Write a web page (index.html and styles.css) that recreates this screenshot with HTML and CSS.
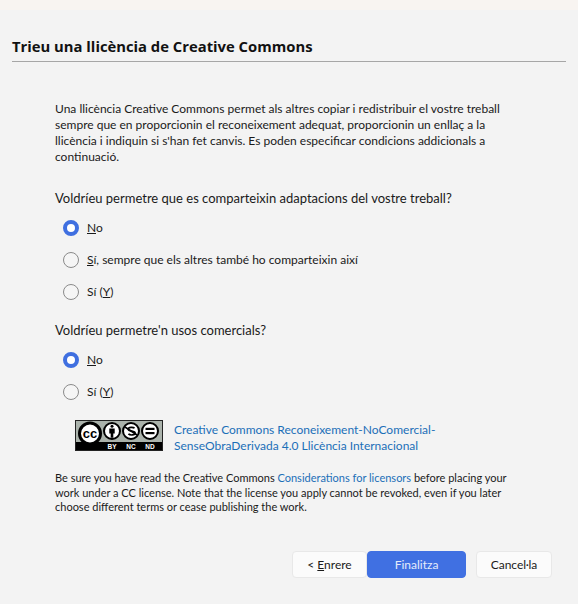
FILE: index.html
```html
<!DOCTYPE html>
<html lang="ca">
<head>
<meta charset="utf-8">
<title>Trieu una llicència</title>
<link rel="stylesheet" href="styles.css">
</head>
<body>
<div class="topstrip"></div>
<main class="dialog">
  <h1 class="title">Trieu una llicència de Creative Commons</h1>
  <div class="content">
    <p class="intro">Una llicència Creative Commons permet als altres copiar i redistribuir el vostre treball<br>sempre que en proporcionin el reconeixement adequat, proporcionin un enllaç a la<br>llicència i indiquin si s'han fet canvis. Es poden especificar condicions addicionals a<br>continuació.</p>
    <h2 class="question q1">Voldríeu permetre que es comparteixin adaptacions del vostre treball?</h2>
    <div class="options">
      <div class="option"><span class="radio on"></span><span class="label"><u>N</u>o</span></div>
      <div class="option"><span class="radio"></span><span class="label"><u>S</u>í, sempre que els altres també ho comparteixin així</span></div>
      <div class="option"><span class="radio"></span><span class="label">Sí (<u>Y</u>)</span></div>
    </div>
    <h2 class="question q2">Voldríeu permetre'n usos comercials?</h2>
    <div class="options">
      <div class="option"><span class="radio on"></span><span class="label"><u>N</u>o</span></div>
      <div class="option"><span class="radio"></span><span class="label">Sí (<u>Y</u>)</span></div>
    </div>
    <div class="license">
      <svg class="badge" width="88" height="31" viewBox="0 0 88 31">
        <rect x="0.5" y="0.5" width="87" height="30" fill="#aab2ab" stroke="#222"/>
        <rect x="1" y="22" width="86" height="8" fill="#000"/>
        <circle cx="15" cy="13.5" r="10.5" fill="#fff" stroke="#000" stroke-width="3"/>
        <text x="15" y="18" class="cc">cc</text>
        <circle cx="37" cy="11" r="8" fill="#fff" stroke="#000" stroke-width="2"/>
        <circle cx="37" cy="6.3" r="1.5" fill="#000"/>
        <path d="M34.3 8.6h5.4v5h-1.4v4.2h-2.6v-4.2h-1.4z" fill="#000"/>
        <circle cx="56" cy="11" r="8" fill="#fff" stroke="#000" stroke-width="2"/>
        <path d="M50 7l12 8" stroke="#000" stroke-width="1.6"/>
        <path d="M59.5 8.3c-1-1.3-6.2-1.6-6.2 1 0 2.6 6.8 1.2 6.8 3.8 0 2.4-5.2 2.3-6.7.8" fill="none" stroke="#000" stroke-width="1.7"/>
        <circle cx="75" cy="11" r="8" fill="#fff" stroke="#000" stroke-width="2"/>
        <rect x="70.5" y="7.8" width="9" height="2.2" fill="#000"/>
        <rect x="70.5" y="12" width="9" height="2.2" fill="#000"/>
        <text x="37" y="29" class="tag">BY</text>
        <text x="56" y="29" class="tag">NC</text>
        <text x="75" y="29" class="tag">ND</text>
      </svg>
      <a class="link license-name">Creative Commons Reconeixement-NoComercial-<br>SenseObraDerivada 4.0 Llicència Internacional</a>
    </div>
    <p class="note">Be sure you have read the Creative Commons <a class="link">Considerations for licensors</a> before placing your<br>work under a CC license. Note that the license you apply cannot be revoked, even if you later<br>choose different terms or cease publishing the work.</p>
  </div>
  <div class="buttons">
    <button class="btn back">&lt; <u>E</u>nrere</button>
    <button class="btn primary">Finalitza</button>
    <button class="btn cancel">Cancel·la</button>
  </div>
</main>
</body>
</html>
```

FILE: styles.css
```css
* { box-sizing: border-box; }
html, body { margin: 0; padding: 0; }
body {
  width: 578px;
  height: 604px;
  overflow: hidden;
  background: #f3f3f3;
  color: #1a1a1a;
  font-family: Lato, "Open Sans", sans-serif;
  font-size: 12px;
}
.topstrip { height: 10px; background: #f8f4f1; }
.dialog { padding: 26px 12px 0; }
.title {
  margin: 0;
  height: 26px;
  border-bottom: 1px solid #a6a6a6;
  font-family: "Open Sans", sans-serif;
  font-size: 14.8px;
  font-weight: 700;
  line-height: 21px;
  color: #111;
}
.content { padding: 0 43px; }
.intro { margin: 39px 0 0; line-height: 16px; font-size: 12px; }
.question { margin: 0; font-size: 13px; font-weight: 400; line-height: 18px; }
.q1 { margin-top: 24px; }
.q2 { margin-top: 19px; }
.options { display: flex; flex-direction: column; gap: 12px; margin-top: 11px; padding-left: 8px; }
.option { display: flex; align-items: center; gap: 8px; height: 20px; }
.radio {
  width: 16px; height: 16px; border-radius: 50%;
  border: 1px solid #8a8a8a; background: #f5f5f5;
}
.radio.on { border: 4px solid #3f6fe0; background: #fff; }
.label { font-size: 12px; padding-bottom: 2px; }
.license { display: flex; align-items: flex-start; gap: 11px; margin-top: 18px; padding-left: 20px; }
.badge { display: block; flex: none; }
.cc { font: 700 13px "Liberation Sans", sans-serif; text-anchor: middle; fill: #000; }
.tag { font: 700 6.5px "Liberation Sans", sans-serif; text-anchor: middle; fill: #fff; }
.link { color: #1b6fb8; }
.license-name { font-size: 12px; line-height: 16px; margin-top: 2px; }
.note { margin: 17px 0 0; font-size: 11px; line-height: 14.5px; }
.buttons { display: flex; margin-top: 36px; padding-left: 280px; }
.btn {
  height: 27px;
  font: 12px Lato, "Open Sans", sans-serif;
  border: 1px solid #e8e8e8;
  border-radius: 4px;
  background: #fbfbfb;
  color: #1a1a1a;
  padding: 0;
}
.back { width: 75px; }
.primary { width: 99px; background: #4070e2; border-color: #4070e2; color: #e4ebfb; }
.cancel { width: 76px; margin-left: 10px; }
```
